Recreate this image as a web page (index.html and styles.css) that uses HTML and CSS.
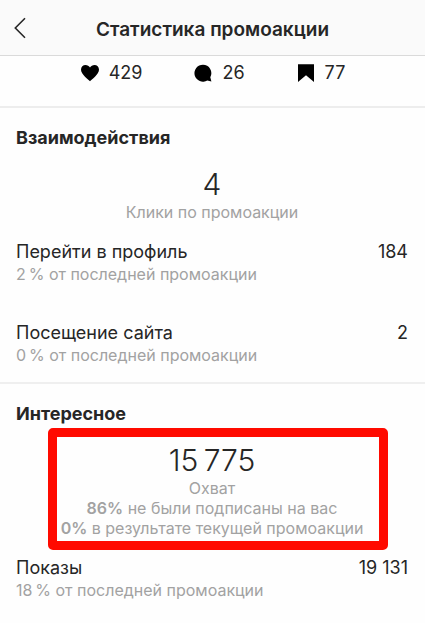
FILE: index.html
```
<!DOCTYPE html>
<html lang="ru">
<head>
<meta charset="utf-8">
<meta name="viewport" content="width=device-width, initial-scale=1">
<title>Статистика промоакции</title>
<link rel="stylesheet" href="styles.css">
</head>
<body>
<header class="topbar">
  <button class="back" type="button" aria-label="Назад">
    <svg width="12" height="22" viewBox="0 0 12 22" fill="none" stroke="#262626" stroke-width="1.6"><path d="M11 1.3 1.3 11 11 20.7"/></svg>
  </button>
  <h1 class="title">Статистика промоакции</h1>
</header>
<main>
  <ul class="totals">
    <li class="total">
      <svg width="20" height="18" viewBox="0 0 20 18"><path d="M10 17.2C8.700 16.200 1 10.400 1 5.800 1 3 3 1 5.500 1 7.400 1 9.100 2 10 3.600 10.900 2 12.600 1 14.500 1 17 1 19 3 19 5.800 19 10.400 11.300 16.200 10 17.200Z"/></svg>
      <span>429</span>
    </li>
    <li class="total">
      <svg width="20" height="18" viewBox="0 0 20 18"><path d="M10 .7a8.500 8.500 0 1 0 4.300 15.800L18.400 17.400 17.300 13.300A8.500 8.500 0 0 0 10 .7Z"/></svg>
      <span>26</span>
    </li>
    <li class="total">
      <svg width="20" height="18" viewBox="0 0 20 18"><path d="M2 .3H18V18L10 11.300 2 18Z"/></svg>
      <span>77</span>
    </li>
  </ul>

  <section class="section">
    <h2 class="heading">Взаимодействия</h2>
    <div class="summary">
      <p class="figure">4</p>
      <p class="note">Клики по промоакции</p>
    </div>
    <div class="row">
      <div>
        <p class="name">Перейти в профиль</p>
        <p class="note">2&thinsp;% от последней промоакции</p>
      </div>
      <p class="name">184</p>
    </div>
    <div class="row">
      <div>
        <p class="name">Посещение сайта</p>
        <p class="note">0&thinsp;% от последней промоакции</p>
      </div>
      <p class="name">2</p>
    </div>
  </section>

  <section class="section">
    <h2 class="heading">Интересное</h2>
    <div class="summary marked">
      <p class="figure">15&thinsp;775</p>
      <p class="note">Охват</p>
      <p class="note"><b>86%</b> не были подписаны на вас</p>
      <p class="note"><b>0%</b> в результате текущей промоакции</p>
    </div>
    <div class="row">
      <div>
        <p class="name">Показы</p>
        <p class="note">18&thinsp;% от последней промоакции</p>
      </div>
      <p class="name">19 131</p>
    </div>
  </section>
</main>
</body>
</html>
```
FILE: styles.css
```
* {
  box-sizing: border-box;
}

body {
  margin: 0;
  background: #fefefe;
  color: #262626;
  font-family: Inter, "Liberation Sans", sans-serif;
  font-size: 18px;
}

h1, h2, p, ul {
  margin: 0;
  padding: 0;
}

b {
  font-weight: 600;
}

.topbar {
  display: grid;
  grid-template-columns: 40px 1fr 40px;
  align-items: center;
  height: 56px;
  background: #fafafa;
  border-bottom: 1px solid #dadada;
}

.back {
  display: flex;
  padding: 0 0 0 14px;
  border: 0;
  background: none;
}

.title {
  padding-top: 5px;
  font-size: 19px;
  font-weight: 600;
  line-height: 24px;
  text-align: center;
}

.totals {
  display: flex;
  justify-content: center;
  gap: 51px;
  padding: 5px 0 21px;
  border-bottom: 2px solid #ededed;
  list-style: none;
}

.total {
  display: flex;
  align-items: center;
  gap: 9px;
  line-height: 24px;
}

.section {
  padding: 18px 17px 17px 16px;
}

.section + .section {
  border-top: 2px solid #efefef;
}

.heading {
  font-size: 18px;
  font-weight: 700;
  line-height: 24px;
}

.summary {
  position: relative;
  margin-top: 16px;
  text-align: center;
}

.figure {
  font-size: 30px;
  font-weight: 300;
  line-height: 36px;
}

.note {
  color: #a2a2a2;
  font-size: 16px;
  line-height: 20px;
}

.name {
  font-size: 18px;
  line-height: 24px;
}

.row {
  display: flex;
  justify-content: space-between;
  margin-top: 18px;
}

.row + .row {
  margin-top: 37px;
}

.marked::before {
  content: "";
  position: absolute;
  inset: -14px 20px -12px 32px;
  border: 9px solid #ff0a00;
  border-radius: 5px;
}
```
